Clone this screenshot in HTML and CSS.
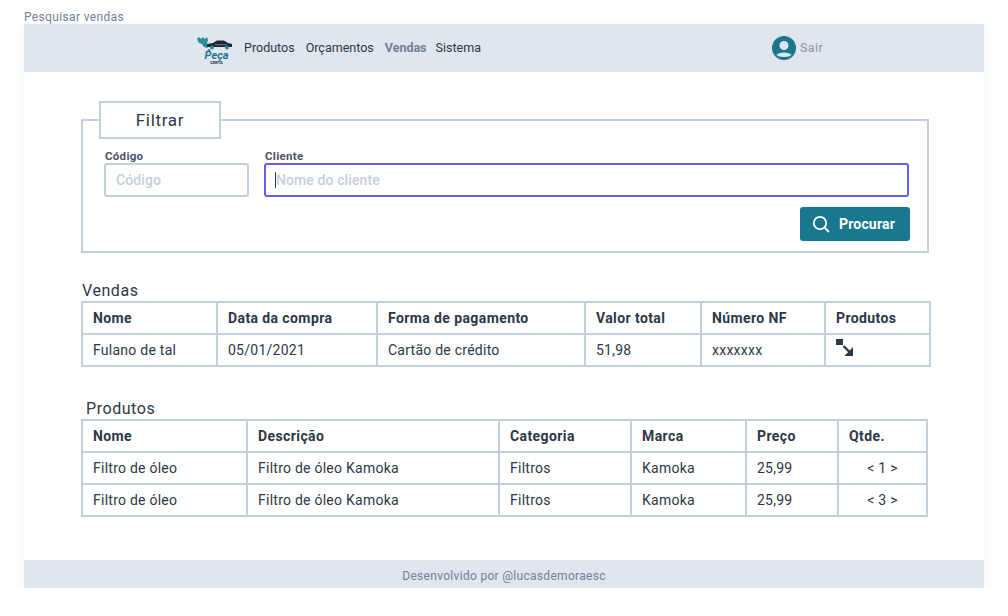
FILE: index.html
```html
<!DOCTYPE html>
<html>
    <head>
        <meta charset="utf-8">
        <title>Pesquisar vendas</title>
        <link rel="stylesheet" href="styles.css">
    </head>
    <body>
        <p class="page-title">Pesquisar vendas</p>
        <div class="frame">
            <header class="topbar">
                <div class="logo">
                    <svg width="36" height="15" viewBox="0 0 36 15">
                        <path d="M1 2 L3 0 L5 2 L7 0 L9 2 L11 0 L12 3 L11 6 L13 9 L11 11 L8 10 L6 7 L3 6 Z" fill="#2a8c9c"/>
                        <path d="M11 7 L17 6 L21 3.5 L28 3.5 L32 6 L36 7 L36 10 L11 10 Z" fill="#1f2a33"/>
                        <rect x="19" y="7" width="12" height="1.2" fill="#5d6b78"/>
                        <circle cx="16" cy="10.5" r="2" fill="#2a8c9c"/>
                        <circle cx="31" cy="10.5" r="2" fill="#2a8c9c"/>
                        <circle cx="13" cy="13.5" r="1.4" fill="#2a8c9c"/>
                    </svg>
                    <span class="logo-name">Peça</span>
                    <span class="logo-sub">CERTA</span>
                </div>
                <nav class="menu">
                    <a href="#">Produtos</a>
                    <a href="#">Orçamentos</a>
                    <a href="#" class="active">Vendas</a>
                    <a href="#">Sistema</a>
                </nav>
                <div class="user">
                    <svg width="24" height="24" viewBox="0 0 24 24">
                        <circle cx="12" cy="12" r="12" fill="#19788e"/>
                        <circle cx="12" cy="9.5" r="4.5" fill="#dfe6ee"/>
                        <path d="M4.5 19 C6 15.5 18 15.5 19.5 19 C17.5 21.5 6.5 21.5 4.5 19 Z" fill="#dfe6ee"/>
                    </svg>
                    <a href="#">Sair</a>
                </div>
            </header>

            <main class="content">
                <fieldset class="filter">
                    <legend>Filtrar</legend>
                    <div class="fields">
                        <div class="field field-code">
                            <label>Código</label>
                            <input type="text" placeholder="Código">
                        </div>
                        <div class="field field-client">
                            <label>Cliente</label>
                            <div class="input-wrap">
                                <input type="text" class="focused" placeholder="Nome do cliente">
                                <span class="caret"></span>
                            </div>
                        </div>
                    </div>
                    <div class="actions">
                        <button class="btn" type="button">
                            <svg width="18" height="18" viewBox="0 0 18 18" fill="none" stroke="#fff" stroke-width="1.8" stroke-linecap="round">
                                <circle cx="8" cy="8" r="6.2"/>
                                <path d="M12.6 12.6 L16.5 16.5"/>
                            </svg>
                            Procurar
                        </button>
                    </div>
                </fieldset>

                <h2 class="sales-title">Vendas</h2>
                <table class="sales">
                    <colgroup>
                        <col class="s1"><col class="s2"><col class="s3"><col class="s4"><col class="s5"><col class="s6">
                    </colgroup>
                    <tr>
                        <th>Nome</th>
                        <th>Data da compra</th>
                        <th>Forma de pagamento</th>
                        <th>Valor total</th>
                        <th>Número NF</th>
                        <th>Produtos</th>
                    </tr>
                    <tr>
                        <td>Fulano de tal</td>
                        <td>05/01/2021</td>
                        <td>Cartão de crédito</td>
                        <td>51,98</td>
                        <td>xxxxxxx</td>
                        <td class="expand">
                            <svg width="18" height="18" viewBox="0 0 18 18">
                                <rect x="0" y="0" width="7" height="6" fill="#2d3748"/>
                                <path d="M7.5 7 L14 13.5" stroke="#2d3748" stroke-width="2.4"/>
                                <path d="M17 8 L17 17 L8.5 17 Z" fill="#2d3748"/>
                            </svg>
                        </td>
                    </tr>
                </table>

                <h2 class="products-title">Produtos</h2>
                <table class="products">
                    <colgroup>
                        <col class="p1"><col class="p2"><col class="p3"><col class="p4"><col class="p5"><col class="p6">
                    </colgroup>
                    <tr>
                        <th>Nome</th>
                        <th>Descrição</th>
                        <th>Categoria</th>
                        <th>Marca</th>
                        <th>Preço</th>
                        <th>Qtde.</th>
                    </tr>
                    <tr>
                        <td>Filtro de óleo</td>
                        <td>Filtro de óleo Kamoka</td>
                        <td>Filtros</td>
                        <td>Kamoka</td>
                        <td>25,99</td>
                        <td class="qty">&lt; 1 &gt;</td>
                    </tr>
                    <tr>
                        <td>Filtro de óleo</td>
                        <td>Filtro de óleo Kamoka</td>
                        <td>Filtros</td>
                        <td>Kamoka</td>
                        <td>25,99</td>
                        <td class="qty">&lt; 3 &gt;</td>
                    </tr>
                </table>
            </main>

            <footer class="footer">Desenvolvido por @lucasdemoraesc</footer>
        </div>
    </body>
</html>
```

FILE: styles.css
```css
*{
    margin:0px;
    padding:0px;
    box-sizing:border-box;
}
body{
    font-family:"Roboto","Liberation Sans",sans-serif;
    color:#2d3748;
    background:#fff;
    padding:0 24px;
}
.page-title{
    height:24px;
    padding-top:10px;
    font-size:12px;
    line-height:14px;
    letter-spacing:0.35px;
    color:#718096;
}
.frame{
    width:960px;
    height:564px;
    display:flex;
    flex-direction:column;
    box-shadow:0 4px 12px rgba(0,0,0,0.05);
}

/* topo */
.topbar{
    height:48px;
    background:#dfe6ee;
    display:flex;
    align-items:center;
    padding-left:172px;
}
.logo{
    width:36px;
    height:28px;
    display:flex;
    flex-direction:column;
    align-items:center;
    margin-right:12px;
    margin-top:6px;
}
.logo-name{
    font-size:11px;
    line-height:8px;
    font-weight:700;
    font-style:italic;
    color:#19788e;
    padding-left:5px;
}
.logo-sub{
    font-size:4px;
    line-height:5px;
    font-weight:700;
    color:#1f2a33;
    padding-left:5px;
}
.menu{
    display:flex;
    gap:11px;
    width:528px;
    margin-top:-2px;
}
.menu a{
    font-size:12.5px;
    color:#2d3748;
    text-decoration:none;
}
.menu a.active{
    color:#718096;
    font-weight:700;
    margin-right:-2px;
}
.user{
    display:flex;
    align-items:center;
    gap:4px;
}
.user a{
    font-size:12.5px;
    letter-spacing:0.4px;
    color:#8795a5;
    text-decoration:none;
    margin-top:-2px;
}

/* filtro */
.content{
    flex:1;
    padding-left:57px;
}
.filter{
    width:848px;
    height:152px;
    margin-top:29px;
    border:2px solid #c3d0dc;
    padding:0 18px 0 21px;
}
.filter legend{
    width:122px;
    height:38px;
    margin-left:-5px;
    margin-right:auto;
    border:2px solid #c3d0dc;
    background:#fff;
    display:flex;
    align-items:center;
    justify-content:center;
    font-size:17px;
    letter-spacing:0.7px;
}
.fields{
    display:flex;
    gap:15px;
    margin-top:11px;
}
.field label{
    display:block;
    font-size:11.5px;
    line-height:13px;
    font-weight:700;
    letter-spacing:0.3px;
    color:#4a5568;
    padding-left:1px;
}
.field-code{
    width:145px;
}
.field-client{
    flex:1;
}
.field input{
    width:100%;
    height:34px;
    border:2px solid #c3d0dc;
    border-radius:3px;
    padding:0 10px;
    font-family:inherit;
    font-size:14px;
    font-weight:500;
    letter-spacing:0.1px;
    outline:none;
}
.field input::placeholder{
    color:#c3d0dc;
}
.input-wrap{
    position:relative;
}
.field input.focused{
    border-color:#6a5cf0;
}
.caret{
    position:absolute;
    left:11px;
    top:9px;
    width:1px;
    height:16px;
    background:#2d3748;
}
.actions{
    display:flex;
    justify-content:flex-end;
    margin-top:10px;
    margin-right:-1px;
}
.btn{
    width:110px;
    height:34px;
    background:#19788e;
    border:none;
    border-radius:3px;
    color:#fff;
    font-family:inherit;
    font-size:14px;
    font-weight:700;
    letter-spacing:0.2px;
    display:flex;
    align-items:center;
    justify-content:center;
    gap:9px;
    padding-right:3px;
}

/* tabelas */
h2{
    font-weight:400;
    font-size:16px;
    line-height:20px;
    letter-spacing:0.55px;
}
.sales-title{
    margin-top:28px;
    padding-left:1px;
}
.products-title{
    margin-top:32px;
    padding-left:5px;
}
table{
    border-collapse:collapse;
    table-layout:fixed;
    font-size:14px;
}
th,td{
    border:2px solid #c3d0dc;
    height:32px;
    padding:0 10px;
    text-align:left;
    letter-spacing:0.25px;
}
th{
    font-weight:700;
    letter-spacing:0.4px;
}
.sales{
    width:848px;
}
.products{
    width:845px;
}
.s1{width:135px;}
.s2{width:160px;}
.s3{width:208px;}
.s4{width:116px;}
.s5{width:124px;}
.s6{width:105px;}
.p1{width:165px;}
.p2{width:252px;}
.p3{width:132px;}
.p4{width:115px;}
.p5{width:92px;}
.p6{width:89px;}
.expand svg{
    display:block;
    margin-top:-4px;
}
.qty{
    font-size:14px;
    text-align:center;
}
.footer{
    height:28px;
    background:#dfe6ee;
    text-align:center;
    font-size:12px;
    letter-spacing:0.3px;
    line-height:32px;
    color:#718096;
}
```
